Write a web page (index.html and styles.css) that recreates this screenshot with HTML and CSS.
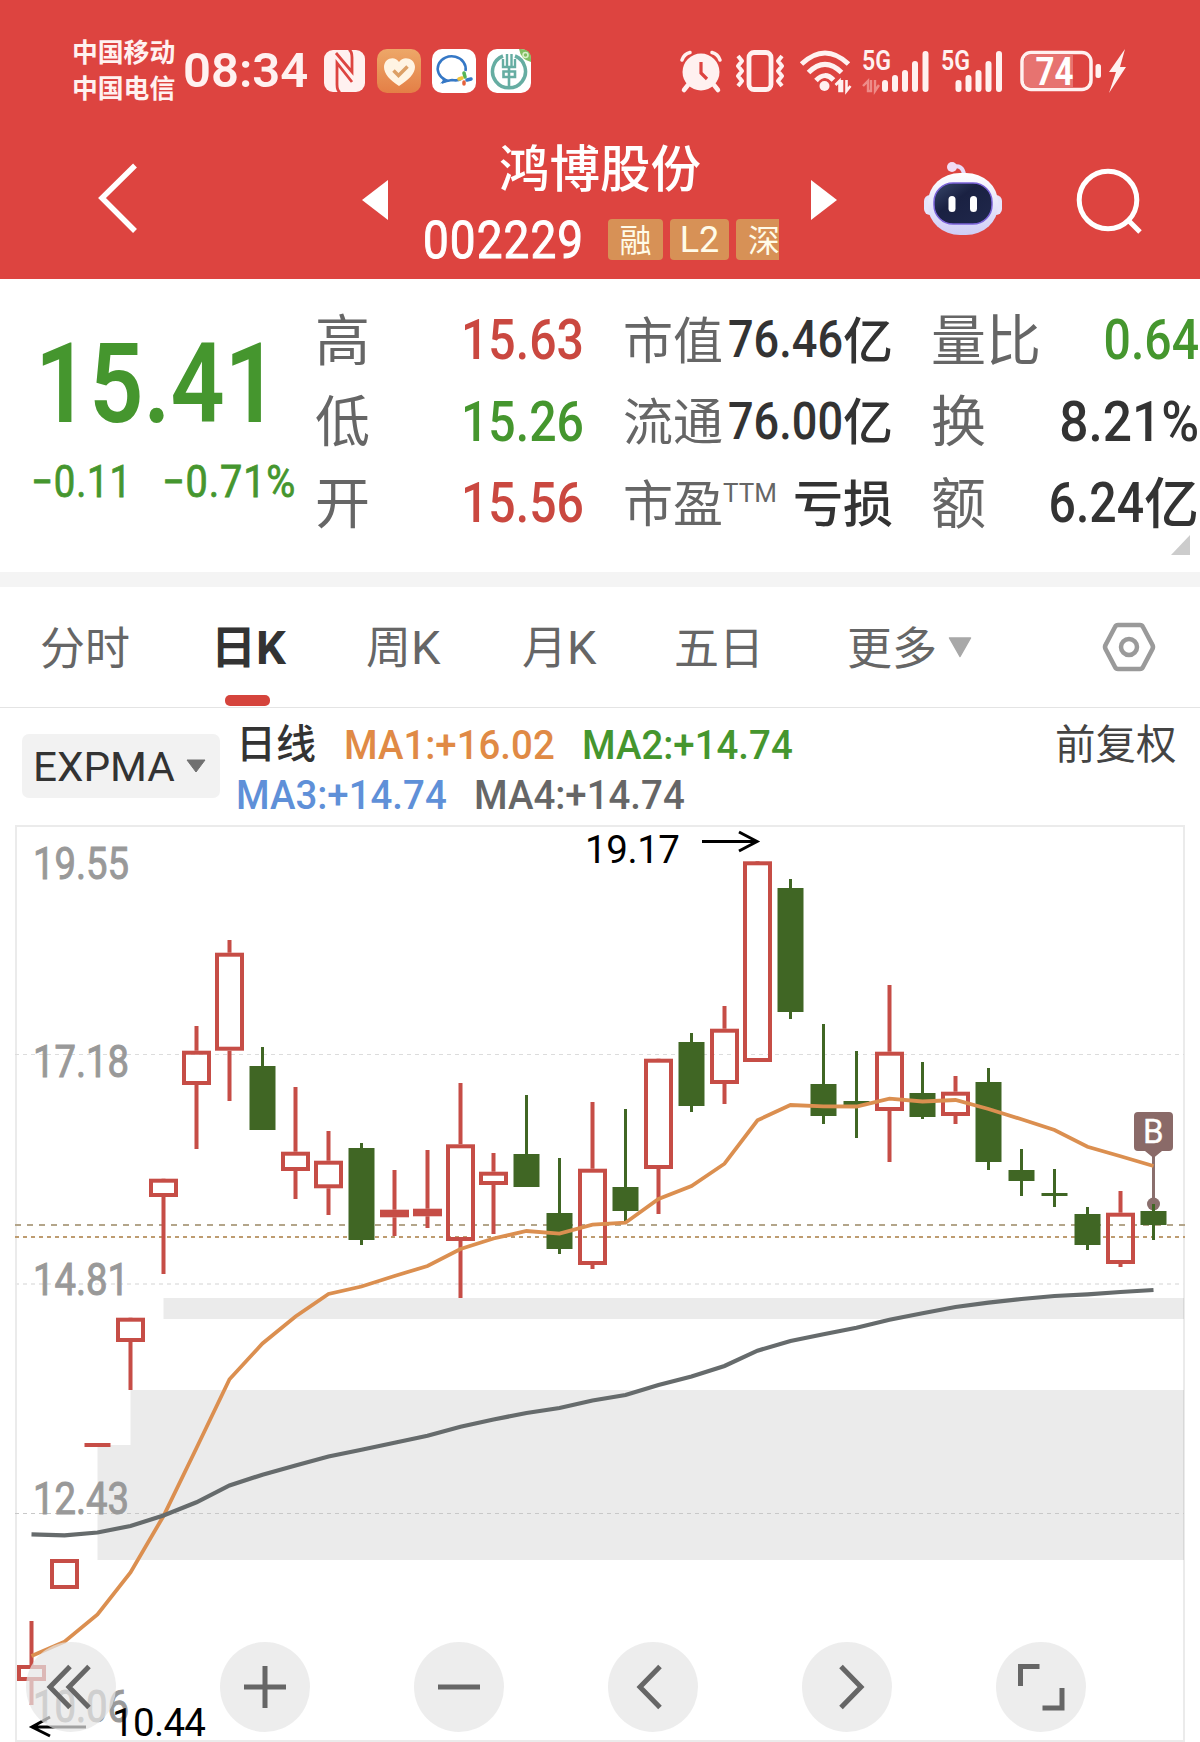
FILE: index.html
```html
<!DOCTYPE html>
<html lang="zh-CN">
<head>
<meta charset="utf-8">
<title>鸿博股份 002229</title>
<link rel="stylesheet" href="styles.css">
</head>
<body>
<header class="header">
  <div class="status">
    <div class="carrier"><span>中国移动</span><span>中国电信</span></div>
    <div class="clock">08:34</div>
    <div class="apps">
      <svg width="41" height="42" viewBox="0 0 41 42"><rect width="41" height="42" rx="9" fill="#fff1f0"/><path d="M16 42.500q-3-2-3-8V13L28 32M25 -.5q3 2 3 8V22L12 3" fill="none" stroke="#dd4440" stroke-width="2.800"/></svg>
      <svg width="44" height="44" viewBox="0 0 44 44"><defs><linearGradient id="og" x2="0" y2="1"><stop stop-color="#eda768"/><stop offset="1" stop-color="#e47f46"/></linearGradient></defs><rect width="44" height="44" rx="10" fill="url(#og)"/><path d="M22 37C13 31 7 25 7 18c0-9 11-12 15-5 4-7 16-4 16 5 0 7-7 13-16 19z" fill="#fff4e3"/><path d="M16.500 21.500l5 5 9-9" fill="none" stroke="#dca066" stroke-width="3.500"/></svg>
      <svg width="44" height="44" viewBox="0 0 44 44"><rect width="44" height="44" rx="10" fill="#fff"/><path d="M33.500 22a14 12.500 0 1 0-20 9l-1.500 1.500 8-1.500q6 1 9-1" fill="none" stroke="#3578c6" stroke-width="2.600"/><path d="M10 35l1-6 6 3z" fill="#3578c6"/><g fill="none" stroke-width="3.500" stroke-linecap="round"><path d="M32 24l1 4" stroke="#54b557"/><path d="M39 30l-4 1" stroke="#3578c6"/><path d="M32 35l0-2" stroke="#e5623d"/><path d="M27 30l3-1" stroke="#f2c43c"/></g></svg>
      <svg width="44" height="44" viewBox="0 0 44 44"><rect width="44" height="44" rx="10" fill="#fff"/><path d="M32 0h2q10 0 10 10v3Q34 11 32 0z" fill="#82bf63"/><circle cx="38.500" cy="6" r="2.500" fill="none" stroke="#d9f0c9" stroke-width="1.500"/><g fill="none" stroke="#66ada2"><path d="M16 7A16.500 16.500 0 1 0 28 7" stroke-width="3.500"/><path d="M20 5v12M24.500 5v12M16 10v8h12v-8" stroke-width="2.400"/><path d="M22 18v21M16.500 22.500h11.500v5.500h-11.500z" stroke-width="2.600"/></g></svg>
    </div>
    <div class="signals">
      <svg width="42" height="42" viewBox="0 0 42 42"><g fill="none" stroke="#fff1f0" stroke-linecap="round"><path d="M2 10Q4 4 10 2.500M40 10Q38 4 32 2.500" stroke-width="3.500"/><path d="M8 35l-4 5M34 35l4 5" stroke-width="4.500"/></g><circle cx="21" cy="22" r="18.500" fill="#fff1f0"/><path d="M21 12v11l6 6" fill="none" stroke="#dd4440" stroke-width="3.200"/></svg>
      <svg class="sg-vibrate" width="50" height="42" viewBox="0 0 50 42"><rect x="14" y="2.500" width="22" height="37" rx="5" fill="none" stroke="#fff1f0" stroke-width="4.800"/><path d="M3 6l4 5-4 5 4 5-4 5 4 5-4 5M47 6l-4 5 4 5-4 5 4 5-4 5 4 5" fill="none" stroke="#fff1f0" stroke-width="4" stroke-linejoin="round"/></svg>
      <svg class="sg-wifi" width="51" height="42" viewBox="0 0 51 42"><g fill="none" stroke="#fff1f0" stroke-width="5"><path d="M1.500 14Q25 -8 48.500 14"/><path d="M8.500 22.500Q25 6 41.500 22.500"/><path d="M16 30.500Q25 21 33.500 30"/></g><circle cx="24.500" cy="36" r="5" fill="#fff1f0"/><path d="M35.500 35l4-4v10h2.500V30M46.500 30v11l4-5" fill="none" stroke="#fff1f0" stroke-width="2.600"/></svg>
      <svg class="sg-cell" width="68" height="42" viewBox="0 0 68 42"><text x="0" y="20" class="fiveg" textLength="29" lengthAdjust="spacingAndGlyphs">5G</text><path d="M1 36l5-5v10h3V30M13 30v11l4-6" fill="none" stroke="#ee8c88" stroke-width="2.400"/><path d="M23 33v6M33 28v11M43 23v16M53 14v25M63.500 4v35" stroke="#fff1f0" stroke-width="6" stroke-linecap="round"/></svg>
      <svg class="sg-cell2" width="63" height="42" viewBox="0 0 63 42"><text x="0" y="20" class="fiveg" textLength="29" lengthAdjust="spacingAndGlyphs">5G</text><path d="M17.500 33v6M27.500 28v11M37.500 23v16M47.500 14v25M58 4v35" stroke="#fff1f0" stroke-width="6" stroke-linecap="round"/></svg>
      <svg class="sg-battery" width="108" height="43" viewBox="0 0 108 43"><rect x="2" y="2.500" width="69" height="37" rx="9" fill="#dd4440" stroke="#fff1f0" stroke-width="3.500"/><path d="M11 4.500h42v33H11q-7 0-7-7v-19q0-7 7-7z" fill="#e77370"/><rect x="75.500" y="14" width="5.500" height="14" rx="2.500" fill="#fff1f0"/><text x="15.500" y="34.500" class="level" textLength="38" lengthAdjust="spacingAndGlyphs">74</text><path d="M105 -1L89 22h7l-7 21 17-26h-6z" fill="#fff1f0"/></svg>
    </div>
  </div>
  <nav class="nav">
    <svg class="back" width="42" height="72" viewBox="0 0 42 72"><path d="M38 3.500L5 36l33 33" fill="none" stroke="#fff" stroke-width="5.500"/></svg>
    <svg class="prev" width="26" height="40" viewBox="0 0 26 40"><path d="M0 20L26 0v40z" fill="#fff"/></svg>
    <div class="stock">
      <h1 class="name">鸿博股份</h1>
      <div class="meta"><span class="code">002229</span><span class="tag">融</span><span class="tag tag-l2">L2</span><span class="tag tag-cut">深</span></div>
    </div>
    <svg class="next" width="26" height="40" viewBox="0 0 26 40"><path d="M26 20L0 0v40z" fill="#fff"/></svg>
    <svg class="robot" width="80" height="76" viewBox="0 0 80 76"><defs><linearGradient id="hd" x2="0" y2="1"><stop stop-color="#fff"/><stop offset="1" stop-color="#cfcdf6"/></linearGradient><linearGradient id="fc" x2="1" y2="1"><stop stop-color="#38476a"/><stop offset=".4" stop-color="#1a2142"/><stop offset="1" stop-color="#20284c"/></linearGradient></defs><path d="M29 6q11-3 12 8" fill="none" stroke="#e9dcf8" stroke-width="4"/><circle cx="29" cy="6" r="5" fill="#f2dcf4"/><rect x="1" y="34" width="12" height="20" rx="6" fill="#e6e4fc"/><rect x="67" y="34" width="12" height="20" rx="6" fill="#e6e4fc"/><rect x="5" y="12" width="70" height="62" rx="32" ry="29" fill="url(#hd)"/><rect x="11" y="22" width="58" height="41" rx="19" fill="url(#fc)" stroke="#7a62d8" stroke-width="1.500"/><rect x="25.500" y="35" width="7" height="16" rx="3.500" fill="#fff"/><rect x="47" y="35" width="7" height="16" rx="3.500" fill="#fff"/></svg>
    <svg class="search" width="68" height="68" viewBox="0 0 68 68"><circle cx="32" cy="32" r="28.800" fill="none" stroke="#fff" stroke-width="5"/><path d="M52 52l12 12" stroke="#fff" stroke-width="5"/></svg>
  </nav>
</header>

<section class="quote">
  <div class="price">
    <div class="last"><span class="last-num">15.41</span></div>
    <div class="change"><span class="chg">−0.11</span><span class="chg pct">−0.71%</span></div>
  </div>
  <div class="stats">
    <div class="cell"><span class="lbl big">高</span><span class="num up">15.63</span></div>
    <div class="cell"><span class="lbl">市值</span><span class="val"><span class="num mid">76.46</span><b>亿</b></span></div>
    <div class="cell"><span class="lbl big">量比</span><span class="num down">0.64</span></div>
    <div class="cell"><span class="lbl big">低</span><span class="num down">15.26</span></div>
    <div class="cell"><span class="lbl">流通</span><span class="val"><span class="num mid">76.00</span><b>亿</b></span></div>
    <div class="cell"><span class="lbl big">换</span><span class="num turnover">8.21%</span></div>
    <div class="cell"><span class="lbl big">开</span><span class="num up">15.56</span></div>
    <div class="cell"><span class="lbl">市盈<sup>TTM</sup></span><span class="val"><b>亏损</b></span></div>
    <div class="cell"><span class="lbl big">额</span><span class="val wide"><span class="num">6.24</span><b>亿</b></span></div>
  </div>
  <svg class="corner" width="19" height="20" viewBox="0 0 19 20"><path d="M19 0v20H0z" fill="#ccc"/></svg>
</section>

<div class="tabs">
  <span class="tab t1">分时</span>
  <span class="tab t2 active">日<i>K</i></span>
  <span class="tab t3">周<i>K</i></span>
  <span class="tab t4">月<i>K</i></span>
  <span class="tab t5">五日</span>
  <span class="tab t6">更多</span>
  <svg class="more" width="24" height="21" viewBox="0 0 24 21"><path d="M1.500 1h21L12 19.500z" fill="#a8a8a8" stroke="#a8a8a8" stroke-width="1.500" stroke-linejoin="round"/></svg>
  <svg class="gear" width="52" height="50" viewBox="0 0 52 50"><path d="M15 3h22q2 0 3 2l9 17q2 3 0 6l-9 17q-1 2-3 2H15q-2 0-3-2L3 28q-2-3 0-6l9-17q1-2 3-2z" fill="none" stroke="#9a9a9a" stroke-width="4.500"/><circle cx="26" cy="25" r="8" fill="none" stroke="#9a9a9a" stroke-width="4.500"/></svg>
</div>

<section class="indicators">
  <div class="picker"><span>EXPMA</span><svg width="20" height="14" viewBox="0 0 20 14"><path d="M1 1h18L10 13z" fill="#707070" stroke="#707070" stroke-linejoin="round"/></svg></div>
  <div class="legend">
    <div class="legend-row"><span class="period">日线</span><span class="ma ma1">MA1:+16.02</span><span class="ma ma2">MA2:+14.74</span></div>
    <div class="legend-row"><span class="ma ma3">MA3:+14.74</span><span class="ma ma4">MA4:+14.74</span></div>
  </div>
  <span class="adjust">前复权</span>
</section>

<section class="chart">
  <svg class="plot" width="1200" height="920" viewBox="0 822 1200 920">
    <path d="M163.500 1298H1184v21H163.500zM97.500 1445h33v-55H1184v170H97.500z" fill="#ebebeb"/>
    <rect x="16" y="826" width="1168" height="915" fill="none" stroke="#000" stroke-opacity=".08" stroke-width="2"/>
    <g stroke="#dcdcdc" stroke-width="1" stroke-dasharray="4 4"><path d="M15 1054.500H1184"/><path d="M15 1284H1184" stroke="#e9e9e9" stroke-width="2"/><path d="M15 1513.500H1184" stroke="#c8c8c8"/></g>
    <path d="M15 1225H1185" stroke="#b3a58a" stroke-width="2" stroke-dasharray="6 6"/>
    <path d="M15 1237H1185" stroke="#be9c70" stroke-width="2" stroke-dasharray="4 4"/>
    <g class="axis">
      <text x="33" y="879" textLength="96" lengthAdjust="spacingAndGlyphs">19.55</text>
      <text x="33" y="1077" textLength="96" lengthAdjust="spacingAndGlyphs">17.18</text>
      <text x="33" y="1295" textLength="96" lengthAdjust="spacingAndGlyphs">14.81</text>
      <text x="33" y="1514" textLength="96" lengthAdjust="spacingAndGlyphs">12.43</text>
      <text x="33" y="1722" textLength="96" lengthAdjust="spacingAndGlyphs">10.06</text>
    </g>
    <path d="M1153.500 1150v54" stroke="#8a6f6d" stroke-width="3"/>
    <circle cx="1153.500" cy="1204" r="6.500" fill="#8a6f6d"/>
    <g id="candles"></g>
    <polyline id="fast" fill="none" stroke="#db8f50" stroke-width="3.800"/>
    <polyline id="slow" fill="none" stroke="#666b6c" stroke-width="4.200"/>
    <path d="M1138 1112h31q4 0 4 4v31q0 4-4 4h-7l-8.500 7-8.500-7h-7q-4 0-4-4v-31q0-4 4-4z" fill="#8a6a68"/>
    <text x="1143" y="1142.500" class="buy">B</text>
    <g class="extreme">
      <text x="585" y="862.500" textLength="95">19.17</text>
      <text x="112" y="1735.500" textLength="94">10.44</text>
      <path d="M702 841.500h54M739 832l18 9.500-18 9.500M32 1727h54M50 1717l-18 10 18 9"/>
    </g>
  </svg>
  <div class="toolbar">
    <button class="tool"><svg viewBox="0 0 90 90"><path d="M44 24.500L24 45l20 20.500M63 24.500L43 45l20 20.500"/></svg></button>
    <button class="tool"><svg viewBox="0 0 90 90"><path d="M24 45h42M45 24v42"/></svg></button>
    <button class="tool"><svg viewBox="0 0 90 90"><path d="M24 45h42"/></svg></button>
    <button class="tool"><svg viewBox="0 0 90 90"><path d="M52 24.500L32 45l20 20.500"/></svg></button>
    <button class="tool"><svg viewBox="0 0 90 90"><path d="M39 24.500L59 45 39 65.500"/></svg></button>
    <button class="tool"><svg viewBox="0 0 90 90"><path d="M43.500 24.500H24.500V44M66 46v20H46.500"/></svg></button>
  </div>
</section>
<script src="chart.js"></script>
</body>
</html>
```
FILE: styles.css
```css
* { box-sizing: border-box; }
body { margin: 0; width: 1200px; height: 1742px; overflow: hidden; background: #fff; color: #333; font-family: Roboto, "Noto Sans CJK SC", sans-serif; }
svg { display: block; flex: none; overflow: visible; }
h1 { margin: 0; }

.header { height: 279px; background: #dd4440; color: #fff; }
.status { display: flex; align-items: center; height: 142px; padding-left: 72px; color: #fff1f0; }
.carrier { display: flex; flex-direction: column; width: 103px; margin-bottom: 5px; font: 700 25.8px/36px "Noto Sans CJK SC", sans-serif; white-space: nowrap; }
.clock { width: 149px; padding-left: 8px; font-size: 49px; font-weight: 650; line-height: 50px; white-space: nowrap; }
.apps { display: flex; align-items: center; gap: 11px; width: 207px; }
.apps svg:first-child { margin-right: 1px; }
.signals { display: flex; align-items: center; margin-left: 149px; }
.sg-vibrate { margin-left: 13px; }
.sg-wifi { margin-left: 15px; }
.sg-cell { margin-left: 11px; }
.sg-cell2 { margin-left: 11px; }
.sg-battery { margin-left: 16px; }
.fiveg { font: 600 27px Roboto, sans-serif; fill: #fff1f0; }
.level { font: 700 38px Roboto, sans-serif; fill: #fff; }

.nav { display: flex; height: 137px; padding-left: 97px; }
.back { margin-top: 20px; }
.prev { margin: 38px 0 0 223px; }
.stock { width: 391px; margin: -14px 0 0 36px; }
.name { width: 352px; text-align: center; font: 500 50.5px/74px "Noto Sans CJK SC", sans-serif; white-space: nowrap; }
.meta { display: flex; align-items: center; width: 355px; height: 41px; margin-top: 17px; overflow: hidden; }
.code { flex: none; width: 185px; margin-left: -1px; padding-top: 2px; font-size: 52px; line-height: 41px; letter-spacing: 1.2px; transform: scaleX(.883); transform-origin: left; -webkit-text-stroke: 1px; }
.tag { flex: none; width: 55px; height: 41px; margin-right: 7px; border-radius: 4px; background: #d79156; color: #fffbe8; font: 400 32px/38px "Noto Sans CJK SC", sans-serif; text-align: center; }
.tag-l2 { width: 59px; font-family: Roboto, sans-serif; font-size: 36px; line-height: 42px; }
.tag-cut { padding: 0 12px; text-align: left; }
.next { margin: 38px 0 0 -4px; }
.robot { margin: 19px 0 0 86px; }
.search { margin: 26px 0 0 73px; }

.quote { position: relative; display: flex; height: 308px; padding-top: 20px; border-bottom: 15px solid #f4f4f4; }
.price { width: 316px; color: #45962e; }
.last { height: 126px; padding: 25px 0 0 35px; }
.last-num { display: inline-block; font-size: 111px; font-weight: 600; line-height: 120px; transform: scaleX(.855); transform-origin: left; }
.change { display: flex; height: 80px; padding: 32px 0 0 31px; }
.chg { width: 131px; font-size: 44px; line-height: 50px; letter-spacing: 1px; white-space: nowrap; transform: scaleX(.87); transform-origin: left; -webkit-text-stroke: .8px; }
.chg.pct { transform: scaleX(.9); }
.stats { display: grid; grid-template-columns: 266px 266px 267px; grid-auto-rows: 81.500px; column-gap: 42px; }
.cell { display: flex; align-items: center; justify-content: space-between; white-space: nowrap; }
.lbl { margin: -6px 0 0 -1px; color: #666; font: 400 50px/80px "Noto Sans CJK SC", sans-serif; }
.lbl.big { margin-top: -8px; font-size: 55px; }
.lbl sup { font: 400 26px/26px Roboto, sans-serif; vertical-align: 20px; }
.num { display: inline-block; font-size: 56px; font-weight: 500; line-height: 80px; color: #333; transform: scaleX(.86); transform-origin: right; }
.num.up { color: #ca4840; }
.num.down { color: #45962e; }
.cell:nth-child(3n+1) .num { margin: 1px -2px 0 0; }
.cell:nth-child(3n) .num { margin-top: 1px; }
.num.turnover { transform: scaleX(.92); }
.num.mid { margin-top: 1px; font-size: 51px; transform: scaleX(.885); }
.val { display: flex; align-items: center; }
.cell:nth-child(3n+2) .val { margin: 0 -3px 0 -30px; }
.val b { margin-top: -6px; font: 500 50px/80px "Noto Sans CJK SC", sans-serif; }
.val.wide b { margin-top: -7px; font-size: 55px; }
.corner { position: absolute; right: 10px; bottom: 17px; }

.tabs { position: relative; display: flex; align-items: center; height: 121px; padding-left: 40px; border-bottom: 1px solid #e4e4e4; }
.tab { position: relative; flex: none; margin-top: -2px; font: 400 45px/60px "Noto Sans CJK SC", sans-serif; color: #666; white-space: nowrap; }
.tab i { font-style: normal; font-family: Roboto, sans-serif; font-size: 47px; }
.t1 { width: 171px; }
.t2 { width: 155px; }
.t3 { width: 156px; }
.t4 { width: 152px; }
.t5 { width: 173px; }
.t6 { width: 101px; }
.tab.active { color: #333; font-weight: 700; }
.tab.active::after { content: ""; position: absolute; left: 14px; top: 80px; width: 45px; height: 11px; border-radius: 5px; background: #d5443c; }
.gear { margin-left: 131px; }

.indicators { display: flex; height: 114px; padding: 14px 0 0 22px; }
.picker { display: flex; align-items: center; width: 198px; height: 64px; margin-top: 12px; padding-left: 11px; border-radius: 7px; background: #f2f2f2; font-size: 41px; }
.picker span { flex: none; width: 153px; padding-top: 2px; transform: scaleX(1.03); transform-origin: left; }
.legend { display: flex; flex-direction: column; width: 837px; padding-left: 16px; }
.legend-row { display: flex; height: 51px; line-height: 46px; }
.period { width: 108px; margin-top: -3px; font: 500 40px/44px "Noto Sans CJK SC", sans-serif; }
.ma { width: 238px; font-size: 41px; font-weight: 500; white-space: nowrap; transform: scaleX(.937); transform-origin: left; }
.ma1 { color: #e08a45; }
.ma2 { color: #45962e; }
.ma3 { color: #5f90d8; }
.ma4 { color: #666; }
.adjust { margin: -2px 0 0 -2px; color: #444; font: 400 40.500px/44px "Noto Sans CJK SC", sans-serif; white-space: nowrap; }

.chart { position: relative; height: 920px; }
.axis text { font: 400 45px Roboto, sans-serif; fill: #999; stroke: #999; stroke-width: 1px; }
.buy { font: 400 33px Roboto, sans-serif; fill: #fff; stroke: #fff; stroke-width: .4px; }
.extreme text { font: 400 38.500px Roboto, sans-serif; fill: #000; }
.extreme path { fill: none; stroke: #000; stroke-width: 3; }
.toolbar { position: absolute; left: 26px; bottom: 10px; display: flex; gap: 104px; }
.tool { width: 90px; height: 90px; padding: 0; border: 0; border-radius: 50%; background: rgba(230, 230, 230, .7); }
.tool path { fill: none; stroke: #666; stroke-width: 5; }
```
FILE: chart.js
```js
// One row per trading day: [rising, wick top, body top, body bottom, wick bottom]
const days = [
  [1, 1621, 1665, 1681, 1705], [1, 1559, 1559, 1589, 1589], [1, 1445, 1443, 1447, 1445],
  [1, 1318, 1317.7, 1342, 1390], [1, 1179, 1178.7, 1197, 1274], [1, 1026, 1050.7, 1085, 1149],
  [1, 940, 952.7, 1050.7, 1101], [0, 1047, 1066, 1130, 1130], [1, 1087, 1151.7, 1171, 1199],
  [1, 1131, 1160.7, 1188.3, 1215], [0, 1143, 1148, 1240, 1245], [1, 1170, 1209.7, 1217.3, 1236],
  [1, 1150, 1208.7, 1216.3, 1228], [1, 1083, 1144.3, 1241, 1298], [1, 1153, 1171.7, 1185, 1234],
  [0, 1095, 1154, 1187, 1187], [0, 1158, 1213, 1249, 1254], [1, 1102, 1168.7, 1265, 1269],
  [0, 1109, 1187, 1211, 1221], [1, 1059, 1058.7, 1169, 1214], [0, 1033, 1042, 1106, 1112],
  [1, 1006, 1028.7, 1084, 1104], [1, 862, 861.3, 1062, 1062], [0, 879, 888, 1012, 1019],
  [0, 1024, 1084, 1116, 1124], [0, 1051, 1101, 1105, 1138], [1, 985, 1051.7, 1111, 1162],
  [0, 1062, 1093, 1117, 1119], [1, 1076, 1091.7, 1116, 1124], [0, 1068, 1082, 1162, 1170],
  [0, 1149, 1170, 1181, 1196], [0, 1169, 1193, 1196, 1207], [0, 1207, 1214, 1245, 1250],
  [1, 1191, 1212.7, 1264, 1267], [0, 1204, 1211, 1225, 1240]
];
const fast = [1656, 1641.7, 1614.5, 1572.5, 1516, 1448, 1379.3, 1343.5, 1316.5, 1294, 1286.5, 1276, 1266, 1249, 1238.5, 1231, 1233.7, 1224.7, 1222.7, 1199, 1186, 1163.7, 1120.3, 1105, 1106.3, 1106.5, 1098.7, 1101.5, 1100, 1109, 1119.3, 1130, 1146.7, 1156.3, 1166];
const slow = [1534.3, 1535.3, 1532.5, 1526, 1515.5, 1502.3, 1485.5, 1474.7, 1465.5, 1456.5, 1449.7, 1442.7, 1435.7, 1426.7, 1419.5, 1413, 1408, 1400.5, 1395, 1385, 1376.5, 1366, 1350.7, 1341, 1334.3, 1327.7, 1319.7, 1313.3, 1307, 1302.7, 1299, 1296, 1294.3, 1292, 1290];
const RED = '#c64d46', GREEN = '#406624';
const xAt = i => 31.5 + 33 * i;

document.getElementById('candles').innerHTML = days.map(([up, high, top, bottom, low], i) => {
  const x = xAt(i);
  if (!up) {
    return `<path d="M${x} ${high}V${low}" stroke="${GREEN}" stroke-width="3"/><rect x="${x - 13}" y="${top}" width="26" height="${bottom - top}" fill="${GREEN}"/>`;
  }
  if (bottom - top < 5) {
    return `<path d="M${x - 13} ${top + 2}h26" stroke="${RED}" stroke-width="4"/>`;
  }
  return `<path d="M${x} ${high}V${top}M${x} ${bottom}V${low}" stroke="${RED}" stroke-width="4"/><rect x="${x - 12.5}" y="${top + 2}" width="25" height="${bottom - top - 4}" fill="none" stroke="${RED}" stroke-width="4"/>`;
}).join('');

const line = ys => ys.map((y, i) => `${xAt(i)},${y}`).join(' ');
document.getElementById('fast').setAttribute('points', line(fast));
document.getElementById('slow').setAttribute('points', line(slow));
```
